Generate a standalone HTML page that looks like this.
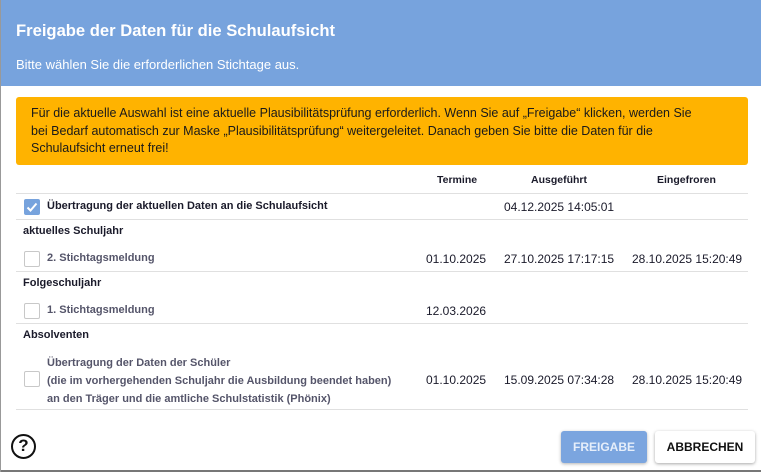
<!DOCTYPE html>
<html><head><style>
*{margin:0;padding:0;box-sizing:border-box}
body{width:761px;height:472px;position:relative;overflow:hidden;background:#fff;font-family:"Liberation Sans",sans-serif;color:#1a1a2a}
.a{position:absolute;white-space:nowrap}
.hd{left:0;top:0;width:761px;height:86px;background:#77a3dd}
.line{position:absolute;left:16px;width:732px;height:1px;background:#e0e0e0}
.cb{position:absolute;left:24px;width:16px;height:16px;border:1px solid #c8c8c8;border-radius:2px;background:#fff}
.b{font-weight:bold;font-size:11px}
.g{font-weight:bold;font-size:11px;color:#55556a}
.n{font-size:12px;color:#1a1a2a}
.btn{position:absolute;top:431px;height:32px;font-weight:bold;font-size:12px;display:flex;align-items:center;justify-content:center;border-radius:3px}
</style></head><body>
<div class="a hd"></div>
<div class="a" style="left:16px;top:21px;font-size:16.6px;font-weight:bold;color:#fff">Freigabe der Daten für die Schulaufsicht</div>
<div class="a" style="left:16px;top:57px;font-size:13px;color:#fff">Bitte wählen Sie die erforderlichen Stichtage aus.</div>
<div class="a" style="left:16px;top:97px;width:732px;height:68px;background:#ffb300;border-radius:3px"></div>
<div class="a" style="left:31px;top:105px;font-size:12.5px;line-height:17.5px;color:#1a1a1a">Für die aktuelle Auswahl ist eine aktuelle Plausibilitätsprüfung erforderlich. Wenn Sie auf „Freigabe“ klicken, werden Sie<br>bei Bedarf automatisch zur Maske „Plausibilitätsprüfung“ weitergeleitet. Danach geben Sie bitte die Daten für die<br>Schulaufsicht erneut frei!</div>
<div class="a b" style="left:437px;top:174px;font-size:10.5px">Termine</div>
<div class="a b" style="left:531px;top:174px;font-size:10.5px">Ausgeführt</div>
<div class="a b" style="left:657px;top:174px;font-size:10.5px">Eingefroren</div>
<div class="line" style="top:193px"></div>
<div class="cb" style="top:199px;background:#77a3dd;border-color:#77a3dd"><svg width="14" height="14" viewBox="0 0 14 14" style="position:absolute;left:0;top:0"><path d="M2.5 7.5 L5.5 10.5 L11.5 3.5" stroke="#fff" stroke-width="2" fill="none"/></svg></div>
<div class="a b" style="left:47px;top:200px">Übertragung der aktuellen Daten an die Schulaufsicht</div>
<div class="a n" style="left:504px;top:200px">04.12.2025 14:05:01</div>
<div class="line" style="top:219px"></div>
<div class="a b" style="left:23px;top:225px">aktuelles Schuljahr</div>
<div class="cb" style="top:251px"></div>
<div class="a g" style="left:47px;top:252px">2. Stichtagsmeldung</div>
<div class="a n" style="left:426px;top:252px">01.10.2025</div>
<div class="a n" style="left:504px;top:252px">27.10.2025 17:17:15</div>
<div class="a n" style="left:632px;top:252px">28.10.2025 15:20:49</div>
<div class="line" style="top:271px"></div>
<div class="a b" style="left:23px;top:277px">Folgeschuljahr</div>
<div class="cb" style="top:303px"></div>
<div class="a g" style="left:47px;top:304px">1. Stichtagsmeldung</div>
<div class="a n" style="left:426px;top:304px">12.03.2026</div>
<div class="line" style="top:323px"></div>
<div class="a b" style="left:23px;top:329px">Absolventen</div>
<div class="cb" style="top:371px"></div>
<div class="a g" style="left:47px;top:354px;line-height:18px">Übertragung der Daten der Schüler<br>(die im vorhergehenden Schuljahr die Ausbildung beendet haben)<br>an den Träger und die amtliche Schulstatistik (Phönix)</div>
<div class="a n" style="left:426px;top:373px">01.10.2025</div>
<div class="a n" style="left:504px;top:373px">15.09.2025 07:34:28</div>
<div class="a n" style="left:632px;top:373px">28.10.2025 15:20:49</div>
<div class="line" style="top:409px"></div>
<div class="a" style="left:11px;top:434px;width:25px;height:25px;border:2.5px solid #111;border-radius:50%;font-weight:bold;font-size:17px;line-height:20px;text-align:center;color:#111">?</div>
<div class="btn" style="left:561px;width:86px;background:#7ba5df;color:#e6eefa;box-shadow:0 1px 3px rgba(0,0,0,.3)">FREIGABE</div>
<div class="btn" style="left:655px;width:100px;background:#fff;color:#111;box-shadow:0 1px 3px rgba(0,0,0,.35)">ABBRECHEN</div>
<div class="a" style="left:0;top:470px;width:761px;height:2px;background:#777"></div>
<div class="a" style="left:0;top:0;width:1px;height:472px;background:#999"></div>
</body></html>
